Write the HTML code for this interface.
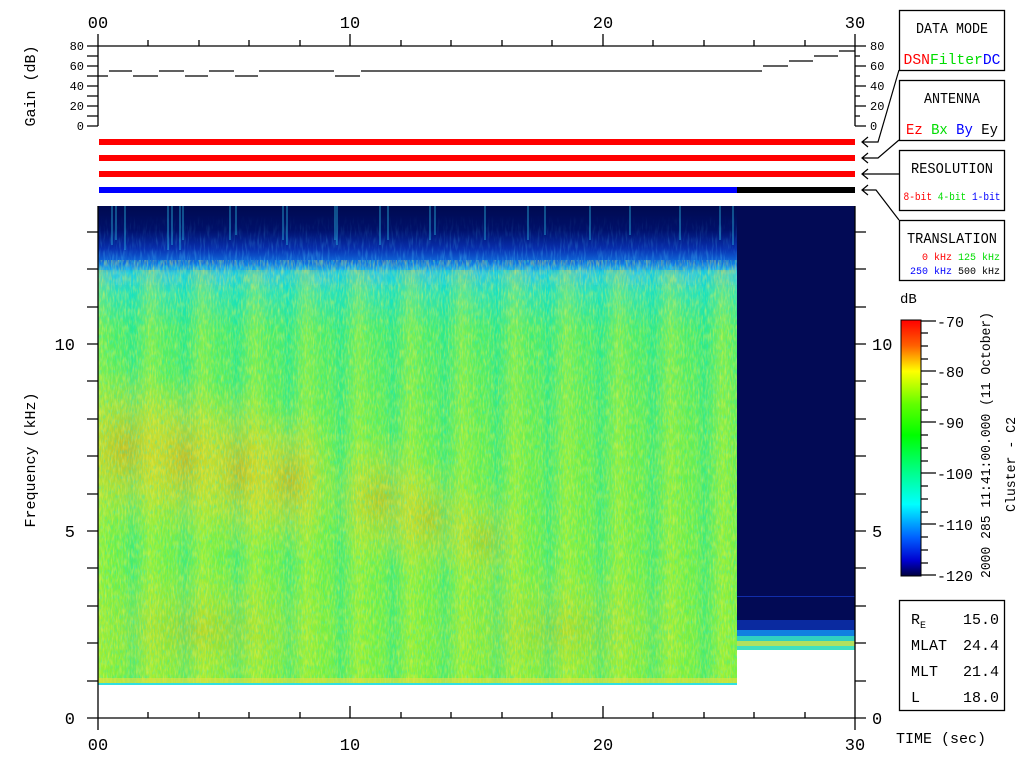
<!DOCTYPE html>
<html><head><meta charset="utf-8"><style>
html,body{margin:0;padding:0;background:#fff;}
svg{display:block;}
text{font-family:"Liberation Mono","DejaVu Sans Mono",monospace;}
</style></head><body>
<svg width="1024" height="768" viewBox="0 0 1024 768" xmlns="http://www.w3.org/2000/svg">
<defs>
<clipPath id="sp"><rect x="98" y="206" width="639" height="479"/></clipPath>
<linearGradient id="topg" x1="0" y1="0" x2="0" y2="1">
<stop offset="0" stop-color="#000a50"/>
<stop offset="0.05" stop-color="#00106a"/>
<stop offset="0.09" stop-color="#0830b0"/>
<stop offset="0.12" stop-color="#1070e0"/>
<stop offset="0.14" stop-color="#20c0f0"/>
<stop offset="0.18" stop-color="#20e0c0"/>
<stop offset="0.26" stop-color="#40ec70"/>
<stop offset="0.5" stop-color="#60ee50"/>
<stop offset="1" stop-color="#70f040"/>
</linearGradient>
<linearGradient id="cbar" x1="0" y1="0" x2="0" y2="1">
<stop offset="0" stop-color="#ff0000"/>
<stop offset="0.1" stop-color="#ff6000"/>
<stop offset="0.2" stop-color="#ffff00"/>
<stop offset="0.33" stop-color="#60ff00"/>
<stop offset="0.45" stop-color="#00ff00"/>
<stop offset="0.6" stop-color="#00ff90"/>
<stop offset="0.72" stop-color="#00ffff"/>
<stop offset="0.85" stop-color="#0060ff"/>
<stop offset="0.94" stop-color="#0000d0"/>
<stop offset="1" stop-color="#000040"/>
</linearGradient>
<linearGradient id="stripes" gradientUnits="userSpaceOnUse" x1="98" y1="0" x2="150" y2="0" spreadMethod="repeat">
<stop offset="0" stop-color="#e8f020" stop-opacity="0.35"/>
<stop offset="0.35" stop-color="#e8f020" stop-opacity="0.05"/>
<stop offset="0.65" stop-color="#00e0c0" stop-opacity="0.3"/>
<stop offset="1" stop-color="#e8f020" stop-opacity="0.35"/>
</linearGradient>
<radialGradient id="blob" cx="0.5" cy="0.5" r="0.5">
<stop offset="0" stop-color="#ffa000" stop-opacity="0.6"/>
<stop offset="0.5" stop-color="#f0d020" stop-opacity="0.4"/>
<stop offset="1" stop-color="#e8e020" stop-opacity="0"/>
</radialGradient>
<filter id="noise" x="0" y="0" width="100%" height="100%">
<feTurbulence type="fractalNoise" baseFrequency="0.6 0.12" numOctaves="2" seed="3"/>
<feColorMatrix values="0 0 0 0 0.95  0 0 0 0 0.9  0 0 0 0 0.1  0 0 1.5 0 -0.6"/>
</filter>
<filter id="noise2" x="0" y="0" width="100%" height="100%">
<feTurbulence type="fractalNoise" baseFrequency="0.7 0.2" numOctaves="2" seed="9"/>
<feColorMatrix values="0 0 0 0 0  0 0 0 0 0.85  0 0 0 0 0.9  0 1.5 0 0 -0.7"/>
</filter>
<filter id="noise3" x="0" y="0" width="100%" height="100%">
<feTurbulence type="fractalNoise" baseFrequency="0.5 0.08" numOctaves="2" seed="5"/>
<feColorMatrix values="0 0 0 0 0.1  0 0 0 0 0.7  0 0 0 0 1  0 0 1.8 0 -0.85"/>
</filter>
<linearGradient id="fade" x1="0" y1="0" x2="0" y2="1">
<stop offset="0" stop-color="#fff" stop-opacity="0"/>
<stop offset="1" stop-color="#fff" stop-opacity="1"/>
</linearGradient>
<mask id="fm"><rect x="98" y="215" width="639" height="70" fill="url(#fade)"/></mask>
</defs>

<g font-size="17" text-anchor="middle" fill="#000">
<text x="98" y="28">00</text><text x="350" y="28">10</text><text x="603" y="28">20</text><text x="855" y="28">30</text>
</g>

<g stroke="#000" stroke-width="1.3" fill="none">
<path d="M87 46H855M98 34V126M855 34V126M87 126H98M855 126H866"/>
<path d="M148 40V46M199 40V46M249 40V46M300 40V46M350 34V46M401 40V46M451 40V46M502 40V46M552 40V46M603 34V46M653 40V46M704 40V46M754 40V46M805 40V46"/>
<path d="M87 56H98M87 66H98M87 76H98M87 86H98M87 96H98M87 106H98M87 116H98"/>
<path d="M855 46H866M855 56H860M855 66H866M855 76H860M855 86H866M855 96H860M855 106H866M855 116H860"/>
<path d="M98 76H108M109 71H132M133 76H158M159 71H184M185 76H208M209 71H234M235 76H258M259 71H334M335 76H360M361 71H762M763 66H788M789 61H813M814 56H838M839 51H855"/>
</g>
<g font-size="12" fill="#000">
<text x="84" y="50" text-anchor="end">80</text><text x="84" y="70" text-anchor="end">60</text><text x="84" y="90" text-anchor="end">40</text><text x="84" y="110" text-anchor="end">20</text><text x="84" y="130" text-anchor="end">0</text>
<text x="870" y="50">80</text><text x="870" y="70">60</text><text x="870" y="90">40</text><text x="870" y="110">20</text><text x="870" y="130">0</text>
</g>
<text transform="translate(35,86) rotate(-90)" font-size="15" text-anchor="middle">Gain (dB)</text>

<rect x="99" y="139" width="756" height="6" fill="#ff0000"/>
<rect x="99" y="155" width="756" height="6" fill="#ff0000"/>
<rect x="99" y="171" width="756" height="6" fill="#ff0000"/>
<rect x="99" y="187" width="638" height="6" fill="#0000ff"/>
<rect x="737" y="187" width="118" height="6" fill="#000"/>

<g stroke="#000" stroke-width="1.2" fill="none">
<path d="M899 70L878 142H862M868 137L862 142L868 147"/>
<path d="M899 140L878 158H862M868 153L862 158L868 163"/>
<path d="M899 174H862M868 169L862 174L868 179"/>
<path d="M899 220L876 190H862M868 185L862 190L868 195"/>
</g>

<rect x="98" y="206" width="757" height="444" fill="#000a50"/>
<rect x="737" y="206" width="118" height="444" fill="#020a55"/>
<rect x="737" y="596" width="118" height="1" fill="#2050ff" opacity="0.5"/>
<rect x="737" y="620" width="118" height="10" fill="#0a2aa0"/>
<rect x="737" y="630" width="118" height="6" fill="#1080e0"/>
<rect x="737" y="636" width="118" height="5" fill="#30d0c0"/>
<rect x="737" y="641" width="118" height="5" fill="#b0e060"/>
<rect x="737" y="646" width="118" height="4" fill="#40e0c0"/>
<g clip-path="url(#sp)">
<rect x="98" y="206" width="639" height="479" fill="url(#topg)"/>
<rect x="98" y="215" width="639" height="70" filter="url(#noise3)" opacity="0.8" mask="url(#fm)"/>
<rect x="98" y="270" width="639" height="415" fill="url(#stripes)"/>
<ellipse cx="125" cy="450" rx="70" ry="90" fill="url(#blob)"/>
<ellipse cx="185" cy="460" rx="55" ry="90" fill="url(#blob)"/>
<ellipse cx="240" cy="470" rx="50" ry="90" fill="url(#blob)"/>
<ellipse cx="290" cy="480" rx="50" ry="80" fill="url(#blob)"/>
<ellipse cx="380" cy="500" rx="55" ry="70" fill="url(#blob)" opacity="0.8"/>
<ellipse cx="430" cy="520" rx="50" ry="65" fill="url(#blob)" opacity="0.7"/>
<ellipse cx="485" cy="540" rx="45" ry="60" fill="url(#blob)" opacity="0.6"/>
<ellipse cx="200" cy="630" rx="150" ry="70" fill="url(#blob)" opacity="0.5"/>
<ellipse cx="560" cy="630" rx="150" ry="70" fill="url(#blob)" opacity="0.4"/>
<rect x="98" y="260" width="639" height="425" filter="url(#noise)" opacity="0.7"/>
<rect x="98" y="260" width="639" height="425" filter="url(#noise2)" opacity="0.6"/>
<rect x="98" y="678" width="639" height="5" fill="#e8e040" opacity="0.6"/>
<rect x="98" y="683" width="639" height="2" fill="#30e0e0"/>
<g stroke="#30d0f0" stroke-width="1" opacity="0.7">
<path d="M112 206V245M116 206V240M125 206V250M168 206V250M172 206V245M180 206V250M183 206V240M230 206V240M236 206V235M283 206V240M287 206V245M335 206V240M337 206V245M380 206V245M388 206V240M430 206V240M435 206V235M485 206V240M528 206V240M545 206V235M590 206V240M630 206V235M680 206V240M720 206V240M733 206V245"/>
</g>
</g>

<g stroke="#000" stroke-width="1.3" fill="none">
<path d="M98 206V730M855 206V730M98 718H855"/>
<path d="M87 718H98M87 681H98M87 643H98M87 606H98M87 568H98M87 531H98M87 494H98M87 456H98M87 419H98M87 381H98M87 344H98M87 307H98M87 269H98M87 232H98"/>
<path d="M855 718H866M855 681H866M855 643H866M855 606H866M855 568H866M855 531H866M855 494H866M855 456H866M855 419H866M855 381H866M855 344H866M855 307H866M855 269H866M855 232H866"/>
<path d="M148 712V718M199 712V718M249 712V718M300 712V718M350 706V718M401 712V718M451 712V718M502 712V718M552 712V718M603 706V718M653 712V718M704 712V718M754 712V718M805 712V718"/>
</g>
<g font-size="17" fill="#000">
<text x="75" y="350" text-anchor="end">10</text><text x="75" y="537" text-anchor="end">5</text><text x="75" y="724" text-anchor="end">0</text>
<text x="872" y="350">10</text><text x="872" y="537">5</text><text x="872" y="724">0</text>
</g>
<g font-size="17" text-anchor="middle" fill="#000">
<text x="98" y="750">00</text><text x="350" y="750">10</text><text x="603" y="750">20</text><text x="855" y="750">30</text>
</g>
<text transform="translate(35,460) rotate(-90)" font-size="15" text-anchor="middle">Frequency (kHz)</text>
<text x="896" y="743" font-size="15">TIME (sec)</text>

<g stroke="#000" stroke-width="1.3" fill="#fff">
<rect x="899.5" y="10.5" width="105" height="60"/>
<rect x="899.5" y="80.5" width="105" height="60"/>
<rect x="899.5" y="150.5" width="105" height="60"/>
<rect x="899.5" y="220.5" width="105" height="60"/>
<rect x="899.5" y="600.5" width="105" height="110"/>
</g>
<g font-size="15" text-anchor="middle" fill="#000">
<text x="952" y="33" textLength="72" lengthAdjust="spacingAndGlyphs">DATA MODE</text>
<text x="952" y="103" textLength="56" lengthAdjust="spacingAndGlyphs">ANTENNA</text>
<text x="952" y="173" textLength="82" lengthAdjust="spacingAndGlyphs">RESOLUTION</text>
<text x="952" y="243" textLength="90" lengthAdjust="spacingAndGlyphs">TRANSLATION</text>
</g>
<text x="952" y="64" font-size="15" text-anchor="middle" textLength="97" lengthAdjust="spacingAndGlyphs"><tspan fill="#ff0000">DSN</tspan><tspan fill="#00dd00">Filter</tspan><tspan fill="#0000ff">DC</tspan></text>
<text x="952" y="134" font-size="15" text-anchor="middle" textLength="92" lengthAdjust="spacingAndGlyphs"><tspan fill="#ff0000">Ez</tspan> <tspan fill="#00dd00">Bx</tspan> <tspan fill="#0000ff">By</tspan> <tspan fill="#000">Ey</tspan></text>
<text x="952" y="200" font-size="11" text-anchor="middle" textLength="97" lengthAdjust="spacingAndGlyphs"><tspan fill="#ff0000">8-bit</tspan> <tspan fill="#00dd00">4-bit</tspan> <tspan fill="#0000ff">1-bit</tspan></text>
<text x="1000" y="260" font-size="10" text-anchor="end"><tspan fill="#ff0000">0 kHz</tspan> <tspan fill="#00dd00">125 kHz</tspan></text>
<text x="1000" y="274" font-size="10" text-anchor="end"><tspan fill="#0000ff">250 kHz</tspan> <tspan fill="#000">500 kHz</tspan></text>

<text x="900" y="303" font-size="14">dB</text>
<rect x="901" y="320" width="20" height="256" fill="url(#cbar)" stroke="#000" stroke-width="1"/>
<g stroke="#000" stroke-width="1.2">
<path d="M921 321H936M921 333H928M921 346H928M921 359H928M921 371H936M921 384H928M921 397H928M921 410H928M921 422H936M921 435H928M921 448H928M921 461H928M921 473H936M921 486H928M921 499H928M921 512H928M921 524H936M921 537H928M921 550H928M921 563H928M921 575H936"/>
</g>
<g font-size="15" fill="#000">
<text x="937" y="327">-70</text><text x="937" y="377">-80</text><text x="937" y="428">-90</text><text x="937" y="479">-100</text><text x="937" y="530">-110</text><text x="937" y="581">-120</text>
</g>
<text transform="translate(990,578) rotate(-90)" font-size="14" textLength="266" lengthAdjust="spacingAndGlyphs">2000 285 11:41:00.000 (11 October)</text>
<text transform="translate(1015,512) rotate(-90)" font-size="14" textLength="95" lengthAdjust="spacingAndGlyphs">Cluster - C2</text>

<g font-size="15" fill="#000">
<text x="911" y="624">R<tspan font-size="10" dy="4">E</tspan></text>
<text x="911" y="650">MLAT</text><text x="911" y="676">MLT</text><text x="911" y="702">L</text>
<text x="999" y="624" text-anchor="end">15.0</text>
<text x="999" y="650" text-anchor="end">24.4</text>
<text x="999" y="676" text-anchor="end">21.4</text>
<text x="999" y="702" text-anchor="end">18.0</text>
</g>
</svg>
</body></html>
